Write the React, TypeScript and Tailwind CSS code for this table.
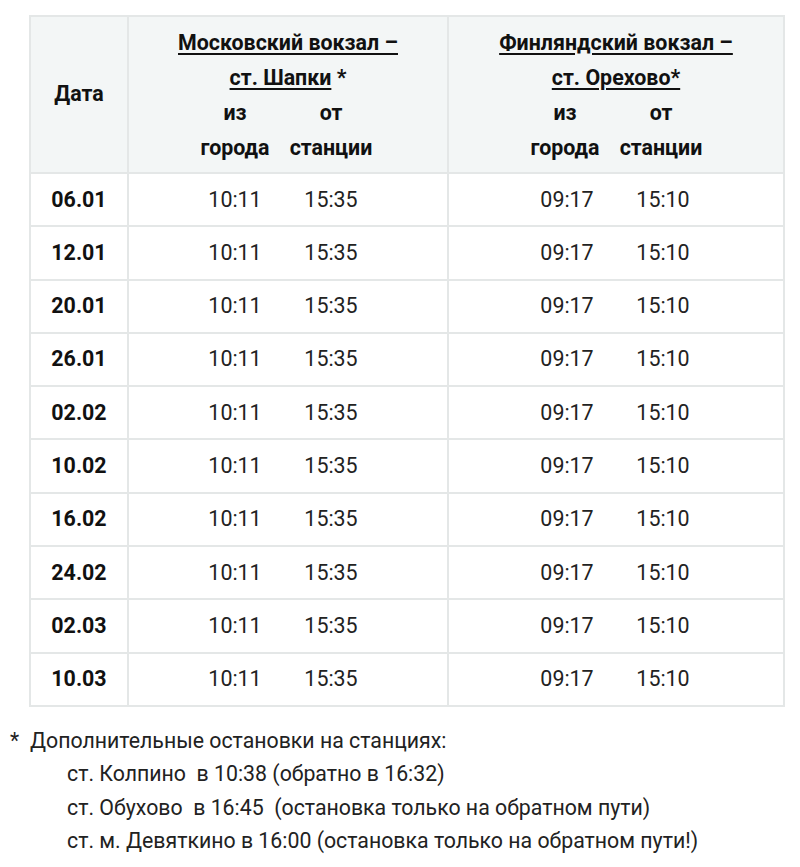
const rows = [
  "06.01",
  "12.01",
  "20.01",
  "26.01",
  "02.02",
  "10.02",
  "16.02",
  "24.02",
  "02.03",
  "10.03",
];

function Pair({ a, b, bold, shift }: { a: string; b: string; bold?: boolean; shift: string }) {
  return (
    <div className={`grid grid-cols-[96px_96px] justify-center ${shift} ${bold ? "font-bold" : ""}`}>
      <span className="text-center">{a}</span>
      <span className="text-center">{b}</span>
    </div>
  );
}

function RouteHeader({ line1, line2, shift }: { line1: string; line2: React.ReactNode; shift: string }) {
  return (
    <div className="flex flex-col items-center leading-[35px]">
      <span className="underline underline-offset-[3px] decoration-[1.5px]">{line1}</span>
      <span>{line2}</span>
      <Pair a="из" b="от" bold shift={shift} />
      <Pair a="города" b="станции" bold shift={shift} />
    </div>
  );
}

export default function App() {
  return (
    <div
      className="w-[800px] h-[867px] bg-white text-[#111] pt-[15px]"
      style={{ fontFamily: "Roboto, 'Noto Sans', sans-serif" }}
    >
      <table className="ml-[29px] w-[754px] border-collapse table-fixed text-[21.4px]">
        <colgroup>
          <col className="w-[98px]" />
          <col className="w-[320px]" />
          <col className="w-[336px]" />
        </colgroup>
        <thead>
          <tr className="bg-[#f3f6f6] h-[157px]">
            <th className="border-2 border-[#e4e7e7] font-bold align-middle">Дата</th>
            <th className="border-2 border-[#e4e7e7] font-bold align-middle">
              <RouteHeader
                shift="pr-[10px]"
                line1="Московский вокзал –"
                line2={
                  <>
                    <span className="underline underline-offset-[3px] decoration-[1.5px]">ст. Шапки</span> *
                  </>
                }
              />
            </th>
            <th className="border-2 border-[#e4e7e7] font-bold align-middle">
              <RouteHeader
                shift="pr-[6px]"
                line1="Финляндский вокзал –"
                line2={<span className="underline underline-offset-[3px] decoration-[1.5px]">ст. Орехово*</span>}
              />
            </th>
          </tr>
        </thead>
        <tbody>
          {rows.map((d) => (
            <tr key={d} className="h-[53.3px]">
              <td className="border-2 border-[#e4e7e7] text-center font-bold">{d}</td>
              <td className="border-2 border-[#e4e7e7] text-[#222]">
                <Pair a="10:11" b="15:35" shift="pr-[10px]" />
              </td>
              <td className="border-2 border-[#e4e7e7] text-[#222]">
                <Pair a="09:17" b="15:10" shift="pr-[2px]" />
              </td>
            </tr>
          ))}
        </tbody>
      </table>

      <div className="mt-[17px] text-[21.3px] leading-[33.5px] text-[#222]">
        <div className="flex">
          <span className="w-[30px] pl-[10px]">*</span>
          <span>Дополнительные остановки на станциях:</span>
        </div>
        <div className="pl-[67px] flex flex-col">
          <span>ст. Колпино&nbsp; в 10:38 (обратно в 16:32)</span>
          <span>ст. Обухово&nbsp; в 16:45&nbsp; (остановка только на обратном пути)</span>
          <span>ст. м. Девяткино в 16:00 (остановка только на обратном пути!)</span>
        </div>
      </div>
    </div>
  );
}
